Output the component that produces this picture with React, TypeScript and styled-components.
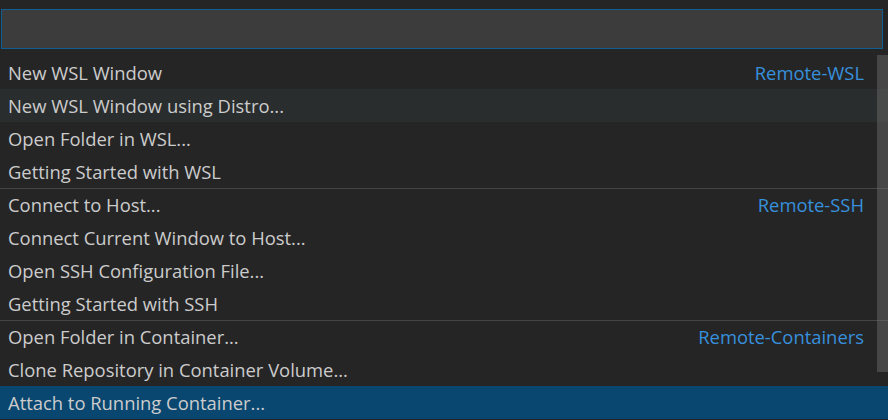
import React, { FC } from "react";
import styled, { createGlobalStyle } from "styled-components";

const colors = {
  bg: "#252526",
  input: "#3c3c3c",
  focus: "#0e5e93",
  text: "#cccccc",
  label: "#3790dc",
  hover: "#2a2d2e",
  selected: "#094771",
  separator: "#454545",
};

type Item = { name: string; label?: string; separator?: boolean };

const Items: Item[] = [
  { name: "New WSL Window", label: "Remote-WSL" },
  { name: "New WSL Window using Distro..." },
  { name: "Open Folder in WSL..." },
  { name: "Getting Started with WSL" },
  { name: "Connect to Host...", label: "Remote-SSH", separator: true },
  { name: "Connect Current Window to Host..." },
  { name: "Open SSH Configuration File..." },
  { name: "Getting Started with SSH" },
  { name: "Open Folder in Container...", label: "Remote-Containers", separator: true },
  { name: "Clone Repository in Container Volume..." },
  { name: "Attach to Running Container..." },
];

const GlobalStyle = createGlobalStyle`
  html, body {
    margin: 0;
    padding: 0;
    background: ${colors.bg};
    overflow: hidden;
  }
`;

const App: FC = () => {
  return (
    <>
      <GlobalStyle />
      <Palette>
        <InputWrap>
          <Input aria-label="command" />
        </InputWrap>
        <ListWrap>
          <List>
            {Items.map((item, idx) => (
              <Row
                key={idx}
                $separator={!!item.separator}
                $hover={idx === 1}
                $selected={idx === Items.length - 1}
              >
                <span>{item.name}</span>
                {item.label && <Label>{item.label}</Label>}
              </Row>
            ))}
          </List>
          <Scrollbar />
        </ListWrap>
      </Palette>
    </>
  );
};

const Palette = styled.div`
  width: 888px;
  height: 420px;
  background: ${colors.bg};
  display: flex;
  flex-direction: column;
  font-family: "Open Sans", "Noto Sans", sans-serif;
  overflow: hidden;
`;

const InputWrap = styled.div`
  padding: 9px 5px 7px 1px;
`;

const Input = styled.div`
  height: 38px;
  background: ${colors.input};
  border: 1px solid ${colors.focus};
`;

const ListWrap = styled.div`
  position: relative;
  flex: 1;
`;

const List = styled.ul`
  list-style: none;
  margin: 0;
  padding: 0;
`;

const Row = styled.li<{ $separator: boolean; $hover: boolean; $selected: boolean }>`
  height: 33px;
  box-sizing: border-box;
  display: flex;
  align-items: center;
  justify-content: space-between;
  padding: 0 24px 2px 8px;
  font-size: 18.4px;
  color: ${colors.text};
  border-top: 1px solid ${(p) => (p.$separator ? colors.separator : "transparent")};
  background: ${(p) =>
    p.$selected ? colors.selected : p.$hover ? colors.hover : "transparent"};
  white-space: nowrap;
`;

const Label = styled.span`
  color: ${colors.label};
`;

const Scrollbar = styled.div`
  position: absolute;
  top: -1px;
  right: 0;
  width: 11px;
  height: 317px;
  background: rgba(121, 121, 121, 0.4);
`;

export default App;
